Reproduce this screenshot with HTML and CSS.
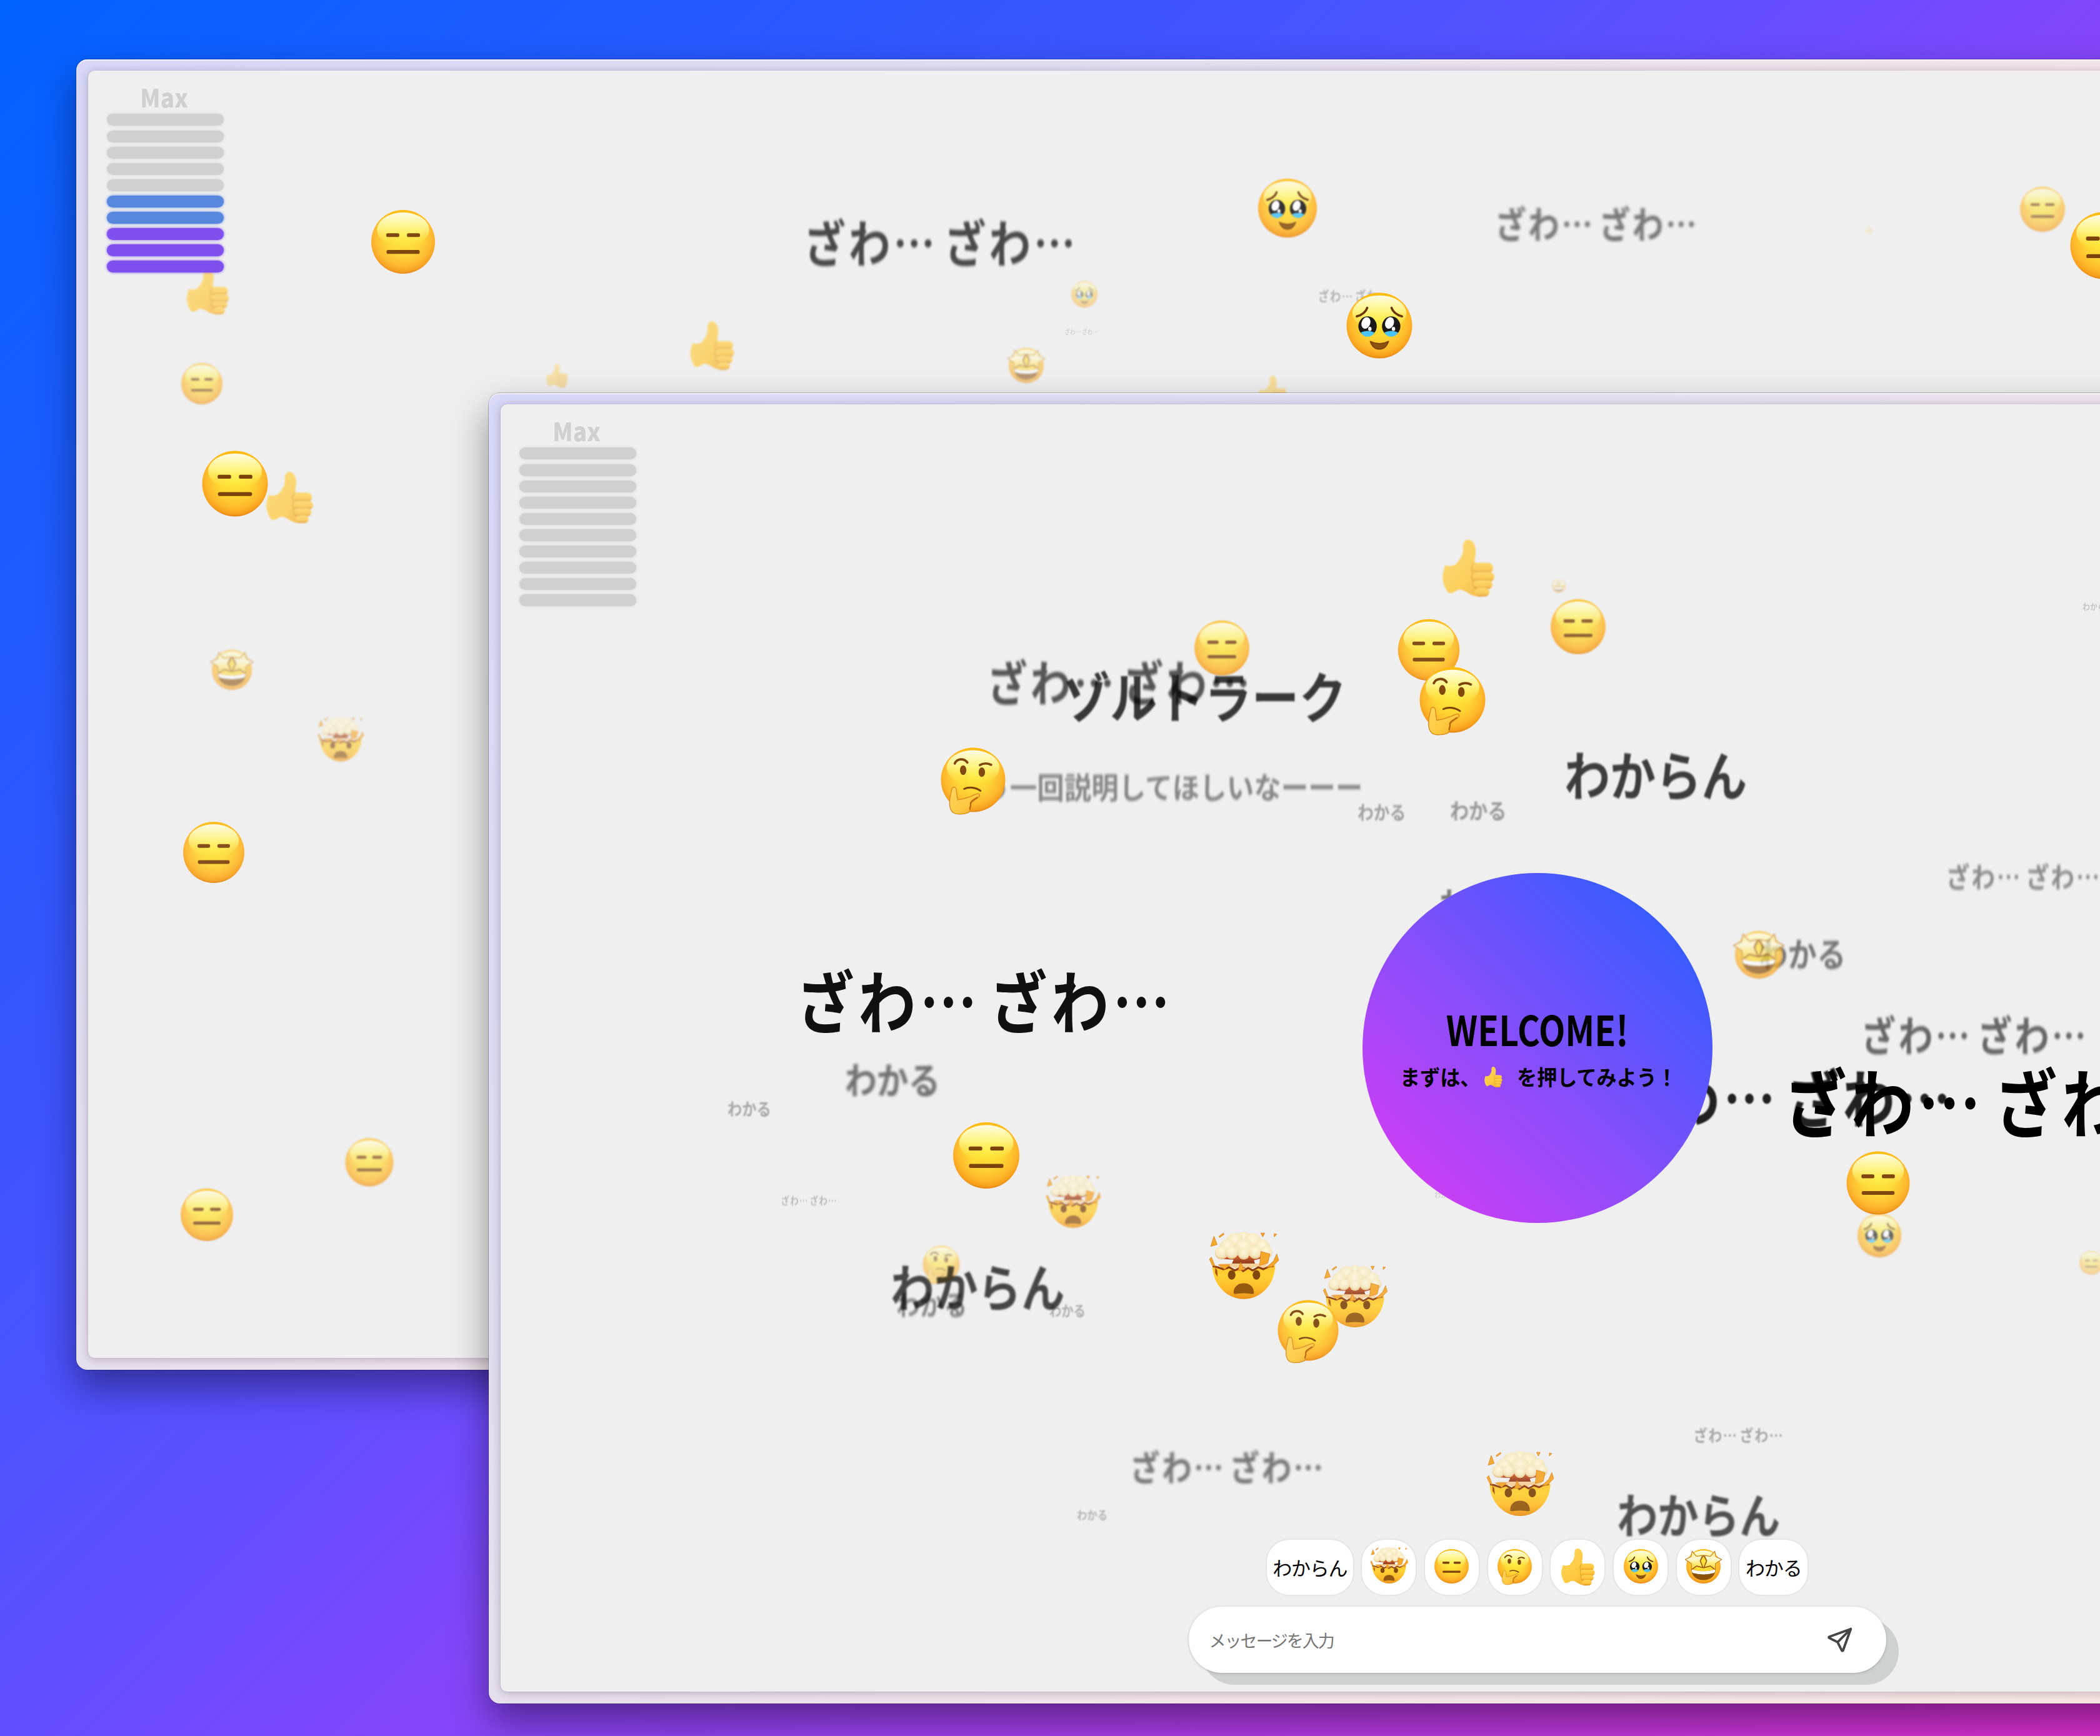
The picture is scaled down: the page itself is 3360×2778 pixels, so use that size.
FILE: index.html
```html
<!DOCTYPE html>
<html lang="ja">
<head>
<meta charset="utf-8">
<title>Reactions</title>
<link rel="stylesheet" href="styles.css">
</head>
<body>
<svg class="sprite" aria-hidden="true">
  <defs>
    <radialGradient id="skin" cx=".5" cy=".42" r=".6">
      <stop offset="0" stop-color="#ffe936"/><stop offset=".45" stop-color="#ffd733"/>
      <stop offset=".75" stop-color="#ffb92b"/><stop offset=".9" stop-color="#f7a01c"/><stop offset="1" stop-color="#d9780f"/>
    </radialGradient>
    <linearGradient id="shine" x1="0" y1="0" x2="0" y2="1">
      <stop offset="0" stop-color="#fffde6"/><stop offset=".45" stop-color="#fffa90" stop-opacity=".85"/><stop offset="1" stop-color="#ffee3c" stop-opacity="0"/>
    </linearGradient>
    <linearGradient id="jaw" x1="0" y1="0" x2="0" y2="1">
      <stop offset="0" stop-color="#ffc42c"/><stop offset=".3" stop-color="#ffd233"/><stop offset=".7" stop-color="#ffba2b"/><stop offset="1" stop-color="#e8901a"/>
    </linearGradient>
    <linearGradient id="hand" x1="0" y1="0" x2="1" y2="1">
      <stop offset="0" stop-color="#ffd75e"/><stop offset=".6" stop-color="#ffc93f"/><stop offset="1" stop-color="#f0a428"/>
    </linearGradient>
    <linearGradient id="knuckle" x1="0" y1="0" x2="0" y2="1">
      <stop offset="0" stop-color="#ffd352"/><stop offset=".65" stop-color="#ffc43a"/><stop offset="1" stop-color="#dd8d1c"/>
    </linearGradient>
    <linearGradient id="star" x1="0" y1="0" x2="0" y2="1">
      <stop offset="0" stop-color="#ffe96a"/><stop offset=".4" stop-color="#fff9d8"/><stop offset=".65" stop-color="#ffec80"/><stop offset="1" stop-color="#ffc92a"/>
    </linearGradient>
    <radialGradient id="puff" cx=".5" cy=".35" r=".65">
      <stop offset="0" stop-color="#fff8dc"/><stop offset=".7" stop-color="#f5e6bc"/><stop offset="1" stop-color="#e2bd82"/>
    </radialGradient>
    <linearGradient id="stem" x1="0" y1="0" x2="0" y2="1">
      <stop offset="0" stop-color="#d9622c"/><stop offset=".5" stop-color="#97401f"/><stop offset="1" stop-color="#c98a52"/>
    </linearGradient>
    <g id="face">
      <circle cx="50" cy="50" r="50" fill="url(#skin)"/>
      <path d="M50 0a50 50 0 0 1 43 24.500C84 10 68 4 50 4S16 10 7 24.500A50 50 0 0 1 50 0z" fill="#ffba08" opacity=".75"/>
      <ellipse cx="50" cy="31" rx="41" ry="27" fill="url(#shine)"/>
    </g>
    <symbol id="blank" viewBox="0 0 100 100" overflow="visible">
      <use href="#face"/>
      <g fill="#7b4209"><rect x="23.500" y="36.500" width="20.500" height="6" rx="2.500"/><rect x="56" y="36.500" width="20.500" height="6" rx="2.500"/><rect x="24" y="62.800" width="52" height="6" rx="2.500"/></g>
    </symbol>
    <symbol id="plead" viewBox="0 0 100 100" overflow="visible">
      <use href="#face"/>
      <g fill="none" stroke="#6b3405" stroke-width="3.400" stroke-linecap="round"><path d="M15.500 36C23 34 29 30 31.500 23"/><path d="M84.500 36C77 34 71 30 68.500 23"/></g>
      <g fill="#1c1a18"><ellipse cx="32" cy="51" rx="14" ry="15"/><ellipse cx="68" cy="51" rx="14" ry="15"/></g>
      <g fill="#4cc3f5"><path d="M21.500 60.500q10.500-5 21 0Q39 67 32 67t-10.500-6.500z"/><path d="M57.500 60.500q10.500-5 21 0Q75 67 68 67t-10.500-6.500z"/></g>
      <g fill="#fff"><ellipse cx="29.500" cy="46" rx="6.500" ry="9" transform="rotate(20 29.500 46)"/><ellipse cx="65.500" cy="46" rx="6.500" ry="9" transform="rotate(20 65.500 46)"/><ellipse cx="35.500" cy="55" rx="2.600" ry="3.200"/><ellipse cx="71.500" cy="55" rx="2.600" ry="3.200"/></g>
      <path d="M36 74q14 7 28 0-4 12-14 12T36 74z" fill="#8a5410" stroke="#7b4209" stroke-width="1.500" stroke-linejoin="round"/>
    </symbol>
    <symbol id="think" viewBox="0 0 100 100" overflow="visible">
      <use href="#face"/>
      <g fill="#80480d"><ellipse cx="34.500" cy="35" rx="5" ry="7.500"/><ellipse cx="63.500" cy="38" rx="5" ry="7.500"/></g>
      <g fill="none" stroke="#7b4209" stroke-width="3.600" stroke-linecap="round"><path d="M21.500 24.500C25 16.500 36 16 41 23"/><path d="M60.500 27C66 23.500 73 24 78 26.500"/><path d="M36 64C44 60 55 62 61.500 67" stroke-width="2.800"/></g>
      <path d="M17 64c2-5 7-3 7 3l2 14c10-1 20-5 29-9 6-2 7 3 2 6l-9 7c-3 3-1 6-2 8s0 7-4 8c-8 3-18 3-23 0-6-5-6-13-5-23z" fill="url(#hand)" stroke="#d98a1c" stroke-width="1.300"/>
      <path d="M57 77c-7 4-12 7-11 11 1 3-2 5-1 8" fill="none" stroke="#b5610c" stroke-width="2"/>
    </symbol>
    <symbol id="starry" viewBox="0 0 100 100" overflow="visible">
      <use href="#face"/>
      <path d="M15 59q35 10 70 0c0 18-14 31-35 31S15 77 15 59z" fill="#8b520c"/>
      <path d="M15.500 59q34.500 10 69 0 0 6-3 10-31 9-63 0-3-4-3-10z" fill="#fff"/>
      <g fill="url(#star)" stroke="#c07a1c" stroke-width="2" stroke-linejoin="round">
        <path d="M17 6l13 15 17-3-7 16 9 20-19-5-15 11 0-18-18-12 17-8z"/>
        <path d="M83 6L70 21l-17-3 7 16-9 20 19-5 15 11 0-18 18-12-17-8z"/>
      </g>
      <path d="M50 22l8 12-7 20h-2l-7-20z" fill="#ffe03a"/>
      <path d="M18 58l12-9 19 5-8-20 9-16 9 16-8 20 19-5 12 9" fill="none" stroke="#9c5c10" stroke-width="2.600" stroke-linejoin="round"/>
    </symbol>
    <symbol id="boom" viewBox="0 0 100 100" overflow="visible">
      <path d="M13 31h73l-8 5-12 3 3 9-9-1-8 6-6-6-8 4-8-4 4-9-18-1z" fill="url(#stem)"/>
      <path d="M12 44h76l-7 8-14-3-8 6-9-6-8 6-10-6-12 3z" fill="#f6cf9a"/>
      <path d="M.5 47l8 1 10 4 9-4 9 6 8-5 5 6 8-6 7 5 9-6 8 4 8-5 10 0a49.500 53 0 0 1-99 0z" fill="url(#jaw)"/>
      <path d="M1 48l8 2 9 3 9-3 9 5 8-4 5 5 8-5 7 4 9-5 8 3 8-4 8-1" fill="none" stroke="#8c3d0f" stroke-width="3"/>
      <path d="M5 51l3 3 1 11-4-6z" fill="#a8500f"/>
      <g fill="url(#puff)"><circle cx="50" cy="5" r="11"/><circle cx="36" cy="10" r="14"/><circle cx="64" cy="10" r="14"/><circle cx="24" cy="18" r="12"/><circle cx="79" cy="18" r="12"/><circle cx="15" cy="27" r="10.500"/><circle cx="85" cy="26" r="10"/><circle cx="50" cy="19" r="15"/><circle cx="31" cy="27" r="10"/><circle cx="68" cy="27" r="10"/><circle cx="50" cy="29" r="9"/></g>
      <g fill="#f5a82a" stroke="#d67c14" stroke-width=".8"><path d="M3 1l5 13-10 3z"/><path d="M11 1l7-5 1 2-7 5z"/><path d="M77-4h6l-3 6z"/><path d="M98-3l4 1-4 4z"/><path d="M77 25l14 4-3 14-13 4z"/><path d="M102 29l3 10-10 10-9 1 11-10z"/><path d="M-1 34l6 15-5-3-4-9z"/><path d="M10 46h18l-8 7z"/><path d="M45 42l6 12-10 1z"/></g>
      <g fill="#80480d"><ellipse cx="31" cy="62" rx="6" ry="7.500"/><ellipse cx="70" cy="62" rx="6" ry="7.500"/></g>
      <path d="M34 90c0-9 6-15 16-15s16 6 16 15c0 4-5 1-16 1s-16 3-16-1z" fill="#94590f"/>
    </symbol>
    <symbol id="thumb" viewBox="0 0 84 91" overflow="visible">
      <path d="M5 41q8 3 17-1c6-7 12-15 12-24C33 8 35 0 42 0c8 0 13 10 12 22-1 7-2 10-1 15l24 3-6 50q-12 3-22-1c-9-4-15-10-22-9-5 1-10 8-17 5C5 78 1 68 1 58z" fill="url(#hand)"/>
      <g fill="url(#knuckle)"><rect x="48" y="37" width="34" height="17" rx="8.500"/><rect x="49" y="52" width="35" height="15" rx="7.500"/><rect x="50" y="65" width="31" height="14" rx="7"/><rect x="53" y="77" width="23" height="14" rx="7"/></g>
      <path d="M51 38q-6 8-2 16-3 7 1 12-2 7 4 13" fill="none" stroke="#d9912a" stroke-width="1.600" opacity=".7"/>
    </symbol>
  </defs>
</svg>

<main class="desktop">
  <section class="window window--back">
    <div class="screen">
      <div class="canvas">
        <span class="say say--zawa" style="--x:1704;--y:532;--f:9.400;--o:.12;--b:.5">ざわ… ざわ…</span>
        <svg class="emoji" style="--x:2990;--y:367;--d:15;--o:.15;--b:1"><use href="#thumb"/></svg>
        <span class="say say--zawa" style="--x:2110;--y:475;--f:20;--o:.25;--b:1">ざわ… ざわ…</span>
        <svg class="emoji" style="--x:1734.600;--y:470.700;--d:42;--o:.42;--b:1.800"><use href="#plead"/></svg>
        <svg class="emoji" style="--x:891;--y:601;--d:38;--o:.42;--b:1.800"><use href="#thumb"/></svg>
        <svg class="emoji" style="--x:2035.600;--y:626;--d:50;--o:.5;--b:1.800"><use href="#thumb"/></svg>
        <svg class="emoji" style="--x:1642;--y:585;--d:56;--o:.55;--b:1.800"><use href="#starry"/></svg>
        <svg class="emoji" style="--x:371;--y:1072;--d:64;--o:.58;--b:1.700"><use href="#starry"/></svg>
        <svg class="emoji" style="--x:544.700;--y:1185;--d:67;--o:.62;--b:1.600"><use href="#boom"/></svg>
        <svg class="emoji" style="--x:322.500;--y:614;--d:66;--o:.6;--b:1.600"><use href="#blank"/></svg>
        <svg class="emoji" style="--x:3268;--y:334.700;--d:72;--o:.62;--b:1.600"><use href="#blank"/></svg>
        <span class="say say--zawa" style="--x:2395;--y:360;--f:56.400;--o:.5;--b:2.200">ざわ… ざわ…</span>
        <svg class="emoji" style="--x:332;--y:466;--d:74;--o:.7;--b:1.500"><use href="#thumb"/></svg>
        <svg class="emoji" style="--x:1139;--y:553;--d:77;--o:.72;--b:1.400"><use href="#thumb"/></svg>
        <svg class="emoji" style="--x:591;--y:1860;--d:77;--o:.7;--b:1.400"><use href="#blank"/></svg>
        <svg class="emoji" style="--x:463;--y:796;--d:82;--o:.75;--b:1.300"><use href="#thumb"/></svg>
        <svg class="emoji" style="--x:331;--y:1944;--d:84;--o:.76;--b:1.200"><use href="#blank"/></svg>
        <span class="say say--zawa" style="--x:1290;--y:389;--f:76;--o:.69;--b:1.800">ざわ… ざわ…</span>
        <svg class="emoji" style="--x:2060;--y:332.500;--d:94;--o:.88;--b:.8"><use href="#plead"/></svg>
        <svg class="emoji" style="--x:342;--y:1364;--d:98;--o:.92;--b:.5"><use href="#blank"/></svg>
        <svg class="emoji" style="--x:644.500;--y:387;--d:102;--o:.96;--b:.3"><use href="#blank"/></svg>
        <svg class="emoji" style="--x:2206.700;--y:520.700;--d:105;--o:1;--b:0"><use href="#plead"/></svg>
        <svg class="emoji" style="--x:376;--y:774;--d:105;--o:1;--b:0"><use href="#blank"/></svg>
        <svg class="emoji" style="--x:3366;--y:392.500;--d:107;--o:1;--b:0"><use href="#blank"/></svg>
      </div>
      <div class="meter">
        <span class="meter__label">Max</span>
        <i class="bar"></i><i class="bar"></i><i class="bar"></i><i class="bar"></i><i class="bar"></i>
        <i class="bar bar--blue"></i><i class="bar bar--blue"></i>
        <i class="bar bar--violet"></i><i class="bar bar--violet"></i><i class="bar bar--violet"></i>
      </div>
    </div>
  </section>

  <section class="window window--front">
    <div class="screen">
      <div class="canvas">
        <span class="say" style="--x:2295;--y:1913;--f:12;--o:.1;--b:.6">わかる</span>
        <span class="say" style="--x:3332;--y:971;--f:14;--o:.18;--b:.6">わからん</span>
        <span class="say say--zawa" style="--x:1250;--y:1922;--f:15.700;--o:.22;--b:.8">ざわ… ざわ…</span>
        <span class="say" style="--x:1723;--y:2424;--f:19;--o:.24;--b:1">わかる</span>
        <svg class="emoji" style="--x:2493.500;--y:938;--d:22;--o:.28;--b:1.200"><use href="#starry"/></svg>
        <span class="say" style="--x:1679;--y:2097;--f:22.400;--o:.28;--b:1">わかる</span>
        <span class="say say--zawa" style="--x:2711;--y:2297;--f:25;--o:.3;--b:1.200">ざわ… ざわ…</span>
        <span class="say" style="--x:1164;--y:1775;--f:27;--o:.3;--b:1.200">わかる</span>
        <span class="say" style="--x:2172;--y:1299;--f:30;--o:.33;--b:1.400">わかる</span>
        <span class="say" style="--x:2320;--y:1297;--f:35;--o:.37;--b:1.600">わかる</span>
        <svg class="emoji" style="--x:3346;--y:2021;--d:38;--o:.4;--b:1.800"><use href="#blank"/></svg>
        <span class="say say--zawa" style="--x:3116;--y:1404;--f:43;--o:.42;--b:1.800">ざわ… ざわ…</span>
        <span class="say" style="--x:1434;--y:2088;--f:44;--o:.44;--b:2">わかる</span>
        <svg class="emoji" style="--x:1506;--y:2023;--d:59;--o:.52;--b:1.800"><use href="#think"/></svg>
        <span class="say say--wide" style="--x:1530;--y:1259;--f:48;--o:.43;--b:1.900">もう一回説明してほしいなーーー</span>
        <span class="say" style="--x:2303;--y:1448;--f:54;--o:.5;--b:1.800">わかる</span>
        <span class="say" style="--x:2814;--y:1528;--f:54;--o:.5;--b:2">わかる</span>
        <span class="say say--zawa" style="--x:1811;--y:2348;--f:54;--o:.5;--b:2.200">ざわ… ざわ…</span>
        <span class="say" style="--x:1352;--y:1728;--f:59;--o:.53;--b:2.200">わかる</span>
        <span class="say say--zawa" style="--x:2981;--y:1657;--f:63;--o:.57;--b:2">ざわ… ざわ…</span>
        <svg class="emoji" style="--x:3006.500;--y:1976.600;--d:70;--o:.65;--b:1.500"><use href="#plead"/></svg>
        <svg class="emoji" style="--x:2814.400;--y:1527.500;--d:76;--o:.7;--b:1.400"><use href="#starry"/></svg>
        <span class="say say--zawa" style="--x:1583;--y:1094;--f:73.600;--o:.64;--b:1.800">ざわ… ざわ…</span>
        <svg class="emoji" style="--x:1717;--y:1925;--d:80;--o:.74;--b:1.300"><use href="#boom"/></svg>
        <span class="say" style="--x:2587;--y:2425;--f:76;--o:.66;--b:1.800">わからん</span>
        <span class="say" style="--x:1425;--y:2060;--f:81;--o:.7;--b:1.600">わからん</span>
        <span class="say" style="--x:2503;--y:1241;--f:85;--o:.74;--b:1.500">わからん</span>
        <span class="say" style="--x:1700;--y:1115;--f:88;--o:.76;--b:1.400">ゾルトラーク</span>
        <svg class="emoji" style="--x:2348.700;--y:908.700;--d:91;--o:.82;--b:1"><use href="#thumb"/></svg>
        <svg class="emoji" style="--x:1954.700;--y:1037;--d:88;--o:.78;--b:1"><use href="#blank"/></svg>
        <svg class="emoji" style="--x:2524.600;--y:1002.500;--d:88;--o:.8;--b:1"><use href="#blank"/></svg>
        <span class="say say--zawa" style="--x:2583;--y:1758;--f:95;--o:.86;--b:1">ざわ… ざわ…</span>
        <svg class="emoji" style="--x:2168;--y:2077;--d:94;--o:.9;--b:.7"><use href="#boom"/></svg>
        <svg class="emoji" style="--x:2093;--y:2129;--d:97;--o:.93;--b:.6"><use href="#think"/></svg>
        <svg class="emoji" style="--x:2432;--y:2377;--d:98;--o:.93;--b:.6"><use href="#boom"/></svg>
        <svg class="emoji" style="--x:2286;--y:1039.700;--d:98.500;--o:.93;--b:.6"><use href="#blank"/></svg>
        <svg class="emoji" style="--x:3004.800;--y:1893;--d:101;--o:.97;--b:.3"><use href="#blank"/></svg>
        <svg class="emoji" style="--x:1990;--y:2027.500;--d:101.500;--o:1;--b:.2"><use href="#boom"/></svg>
        <svg class="emoji" style="--x:1557.400;--y:1248;--d:103;--o:.98;--b:.3"><use href="#think"/></svg>
        <span class="say say--zawa" style="--x:1280;--y:1604;--f:104.500;--o:.93;--b:.7">ざわ… ざわ…</span>
        <svg class="emoji" style="--x:2324;--y:1119.600;--d:105;--o:1;--b:0"><use href="#think"/></svg>
        <svg class="emoji" style="--x:1578;--y:1849;--d:106;--o:1;--b:0"><use href="#blank"/></svg>
        <span class="say say--zawa" style="--x:2860;--y:1766;--f:114;--o:1;--b:0">ざわ… ざわ…</span>
      </div>
      <div class="meter">
        <span class="meter__label">Max</span>
        <i class="bar"></i><i class="bar"></i><i class="bar"></i><i class="bar"></i><i class="bar"></i>
        <i class="bar"></i><i class="bar"></i><i class="bar"></i><i class="bar"></i><i class="bar"></i>
      </div>
      <div class="welcome">
        <h1 class="welcome__title">WELCOME!</h1>
        <p class="welcome__text"><span>まずは、</span><svg class="welcome__thumb"><use href="#thumb"/></svg><span>を押してみよう！</span></p>
      </div>
      <div class="controls">
        <div class="reactions">
          <button class="chip chip--long"><span class="chip__text">わからん</span></button>
          <button class="chip"><svg class="chip__icon"><use href="#boom"/></svg></button>
          <button class="chip"><svg class="chip__icon"><use href="#blank"/></svg></button>
          <button class="chip"><svg class="chip__icon"><use href="#think"/></svg></button>
          <button class="chip"><svg class="chip__icon chip__icon--thumb"><use href="#thumb"/></svg></button>
          <button class="chip"><svg class="chip__icon"><use href="#plead"/></svg></button>
          <button class="chip"><svg class="chip__icon"><use href="#starry"/></svg></button>
          <button class="chip chip--mid"><span class="chip__text">わかる</span></button>
        </div>
        <div class="composer">
          <span class="composer__hint">メッセージを入力</span>
          <svg class="composer__send" viewBox="0 0 24 24"><path d="M10 14L21 3m0 0l-6.500 18a.55.55 0 0 1-1 0L10 14l-7-3.500a.55.55 0 0 1 0-1L21 3"/></svg>
        </div>
      </div>
    </div>
  </section>
</main>
</body>
</html>
```
FILE: styles.css
```css
* { box-sizing: border-box; }

body {
  margin: 0;
  font-family: "Noto Sans CJK JP", "Noto Sans", sans-serif;
}

.sprite { position: absolute; width: 0; height: 0; }

.desktop {
  position: relative;
  width: 3360px;
  height: 2778px;
  overflow: hidden;
  background: linear-gradient(135deg, #0061ff 0%, #4353ff 33%, #604eff 45%, #8147fa 55%, #dc2fd0 100%);
}

/* windows */
.window {
  position: absolute;
  width: 3355px;
  height: 2097px;
  padding: 18px 19px 19px;
  border-radius: 18px;
  background: linear-gradient(135deg, #d7d8f6 0%, #dedcf0 25%, #f0e3e9 55%, #f9e6de 100%);
  box-shadow: 0 0 0 1px rgba(0, 0, 0, .22), 0 28px 60px rgba(0, 0, 0, .42), inset 0 2px 1px rgba(255, 255, 255, .6);
}
.window--back { left: 122px; top: 95px; --ox: 141; --oy: 113; }
.window--front { left: 782px; top: 629px; --ox: 801; --oy: 647; }

.screen {
  position: relative;
  display: flex;
  flex-direction: column;
  justify-content: space-between;
  height: 100%;
  padding: 24px 30px 30px;
  border-radius: 10px;
  overflow: hidden;
  background: #efefef;
}
.window::after {
  content: "";
  position: absolute;
  inset: 18px 19px 19px;
  border-radius: 10px;
  box-shadow: 0 2px 14px rgba(40, 20, 60, .26), 0 0 1px rgba(0, 0, 0, .2);
  clip-path: inset(-18px -19px -19px);
  pointer-events: none;
}

/* drifting reactions, placed in desktop coordinates */
.canvas { position: absolute; inset: 0; }
.say, .emoji {
  position: absolute;
  left: calc((var(--x) - var(--ox)) * 1px);
  top: calc((var(--y) - var(--oy)) * 1px);
  opacity: var(--o);
  filter: blur(calc(var(--b) * 1px));
}
.say {
  font-size: calc(var(--f) * 1px);
  font-weight: 700;
  line-height: 1;
  white-space: nowrap;
  color: #000;
  transform-origin: 0 50%;
  transform: translateY(calc(-50% - .05em)) scaleX(.86);
}
.say--zawa {
  letter-spacing: .07em;
  word-spacing: -.15em;
  transform: translate(-.05em, calc(-50% - .05em)) scale(.88, 1.06);
}
.say--wide { transform: translateY(calc(-50% - .05em)) scaleX(.907); }
.emoji {
  width: calc(var(--d) * 1px);
  height: calc(var(--d) * 1px);
  overflow: visible;
  transform: translate(-50%, -50%);
}

/* level meter */
.meter {
  position: relative;
  display: flex;
  flex-direction: column;
  gap: 7.100px;
  width: 187px;
}
.meter__label {
  height: 38.400px;
  padding-right: 4px;
  font-size: 40px;
  font-weight: 900;
  line-height: 37px;
  text-align: center;
  color: #d0d0d0;
  transform: scaleX(.92);
}
.bar {
  height: 19px;
  border-radius: 10px;
  background: #d0d0d0;
  box-shadow: 0 0 4px rgba(208, 208, 208, .9);
}
.bar--blue { background: #5888dd; box-shadow: 0 0 4px #5888dd; }
.bar--violet { background: #7f50ee; box-shadow: 0 0 4px #7f50ee; }

/* welcome disc */
.welcome {
  position: absolute;
  left: 50%;
  top: 50%;
  display: flex;
  flex-direction: column;
  align-items: center;
  justify-content: center;
  width: 560px;
  height: 560px;
  padding-bottom: 4px;
  border-radius: 50%;
  transform: translate(-50%, -50%);
  background: linear-gradient(45deg, #d63cf5 8%, #7c50fa 52%, #2f5cff 90%);
}
.welcome__title {
  margin: 0;
  font-size: 66px;
  font-weight: 700;
  line-height: 76px;
  transform: scaleX(.835);
}
.welcome__text {
  display: flex;
  align-items: center;
  gap: 6px;
  margin: 20px 0 0;
  font-size: 34px;
  font-weight: 700;
  line-height: 40px;
  white-space: nowrap;
  transform: translateX(2px) scaleX(.945);
}
.welcome__thumb { width: 40px; height: 33px; margin: 0 14px 0 -4px; }

/* controls */
.controls {
  position: relative;
  display: flex;
  flex-direction: column;
  align-items: center;
  gap: 17px;
}
.reactions { display: flex; gap: 10.400px; }
.chip {
  display: flex;
  align-items: center;
  justify-content: center;
  width: 90.300px;
  height: 92px;
  padding: 0;
  border: 2px solid #e5e5e5;
  border-radius: 38px;
  background: #fff;
  font: 400 31px/1 "Noto Sans CJK JP", sans-serif;
  color: #000;
}
.chip--long { width: 142px; }
.chip--mid { width: 113px; }
.chip__text { margin: -2px 0 0; letter-spacing: -.04em; }
.chip__icon { width: 55px; height: 55px; margin-bottom: 4px; overflow: visible; }
.chip__icon--thumb { height: 59px; margin-bottom: 2px; }
.composer {
  display: flex;
  align-items: center;
  justify-content: space-between;
  width: 1116px;
  height: 106px;
  padding: 0 51px 0 33px;
  border-radius: 53px;
  background: #fff;
  box-shadow: 0 1px 4px rgba(0, 0, 0, .2), 20px 19px 0 #cfd1d0;
}
.composer__hint { font-size: 27px; color: #757575; letter-spacing: -.075em; }
.composer__send {
  width: 46px;
  height: 46px;
  fill: none;
  stroke: #444;
  stroke-width: 2;
  stroke-linecap: round;
  stroke-linejoin: round;
}
```
